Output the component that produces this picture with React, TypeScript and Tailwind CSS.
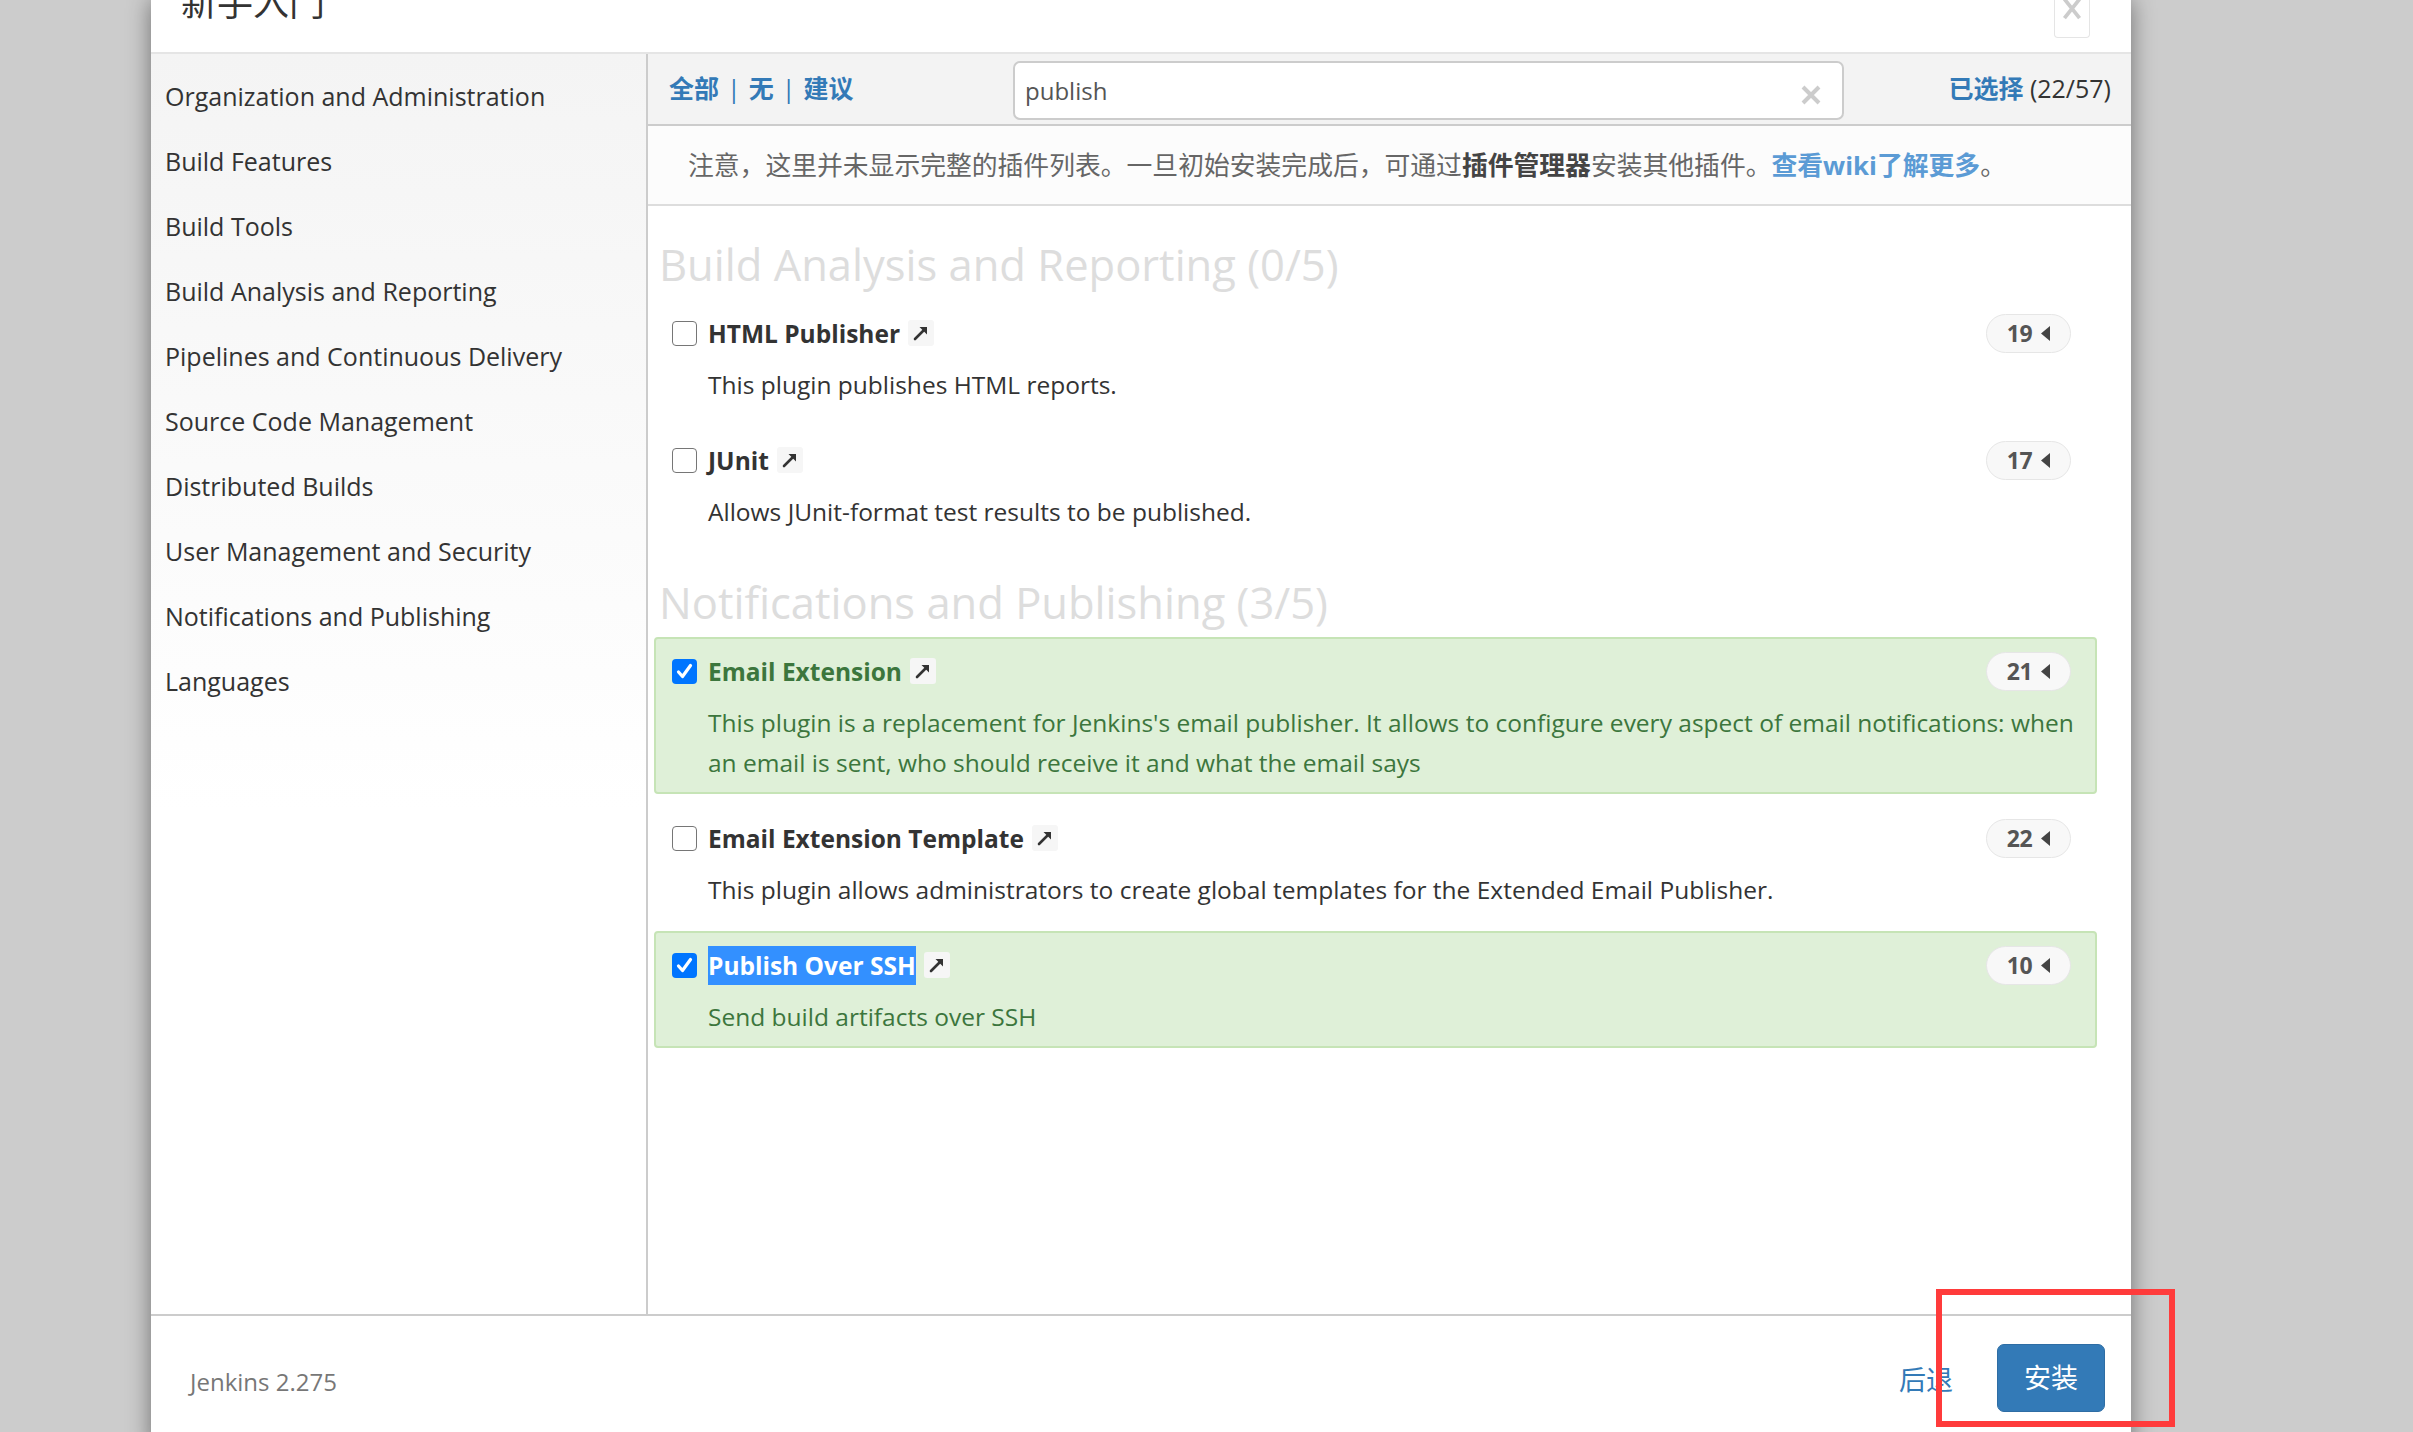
import React from "react";

const FONT = { fontFamily: "'Open Sans', 'Noto Sans CJK SC', sans-serif" };

const categories = [
  "Organization and Administration",
  "Build Features",
  "Build Tools",
  "Build Analysis and Reporting",
  "Pipelines and Continuous Delivery",
  "Source Code Management",
  "Distributed Builds",
  "User Management and Security",
  "Notifications and Publishing",
  "Languages",
];

type Plugin = {
  name: string;
  desc: string;
  deps: number;
  checked: boolean;
  highlight?: boolean;
};

const groups: { title: string; plugins: Plugin[] }[] = [
  {
    title: "Build Analysis and Reporting (0/5)",
    plugins: [
      { name: "HTML Publisher", desc: "This plugin publishes HTML reports.", deps: 19, checked: false },
      { name: "JUnit", desc: "Allows JUnit-format test results to be published.", deps: 17, checked: false },
    ],
  },
  {
    title: "Notifications and Publishing (3/5)",
    plugins: [
      {
        name: "Email Extension",
        desc: "This plugin is a replacement for Jenkins's email publisher. It allows to configure every aspect of email notifications: when an email is sent, who should receive it and what the email says",
        deps: 21,
        checked: true,
      },
      {
        name: "Email Extension Template",
        desc: "This plugin allows administrators to create global templates for the Extended Email Publisher.",
        deps: 22,
        checked: false,
      },
      { name: "Publish Over SSH", desc: "Send build artifacts over SSH", deps: 10, checked: true, highlight: true },
    ],
  },
];

function CheckBox({ checked }: { checked: boolean }) {
  if (checked) {
    return (
      <span className="w-[25px] h-[25px] rounded-[4px] bg-[#0075ff] flex items-center justify-center shrink-0">
        <svg width="19" height="19" viewBox="0 0 19 19">
          <path d="M3.5 10 L7.5 14.5 L15.5 3.5" fill="none" stroke="#fff" strokeWidth="3.2" strokeLinecap="round" strokeLinejoin="round" />
        </svg>
      </span>
    );
  }
  return <span className="w-[25px] h-[25px] rounded-[4px] border-[1.5px] border-[#767676] bg-white shrink-0" />;
}

function ExtLink() {
  return (
    <span className="w-[26px] h-[26px] rounded-[3px] bg-[#f6f6f6] flex items-center justify-center ml-[8px] shrink-0">
      <svg width="18" height="18" viewBox="0 0 18 18">
        <path d="M3 15 L12 6" stroke="#333" strokeWidth="2.6" strokeLinecap="round" />
        <path d="M7.5 3 L15 3 L15 10.5 Z" fill="#333" />
      </svg>
    </span>
  );
}

function Badge({ n }: { n: number }) {
  return (
    <span className="ml-auto w-[85px] h-[39px] rounded-full border border-[#e6e6e6] bg-[#f8f8f8] flex items-center justify-center gap-[9px] shrink-0">
      <span className="text-[23px] font-bold text-[#555] leading-none tracking-[-0.5px]">{n}</span>
      <svg width="9" height="15" viewBox="0 0 9 15">
        <path d="M9 0 L9 15 L0 7.5 Z" fill="#444" />
      </svg>
    </span>
  );
}

function PluginRow({ p }: { p: Plugin }) {
  const green = p.checked;
  return (
    <div
      className={
        "mt-[10px] border-2 rounded-[4px] pt-[12px] pb-[9px] pl-[16px] pr-[10px] " +
        (green ? "bg-[#dff0d8] border-[#c6e4b6] text-[#3c763d]" : "border-transparent text-[#333]")
      }
    >
      <div className="h-[40px] flex items-center mr-[14px]">
        <CheckBox checked={p.checked} />
        <span className="ml-[11px] text-[24.5px] font-bold leading-[39px]">
          {p.highlight ? <span className="bg-[#3390ff] text-white inline-block">{p.name}</span> : p.name}
        </span>
        <ExtLink />
        <Badge n={p.deps} />
      </div>
      <p className="mt-[12px] pl-[36px] text-[24.5px] leading-[40px]">{p.desc}</p>
    </div>
  );
}

export default function App() {
  return (
    <div className="w-[2413px] h-[1432px] bg-[#cccccc] overflow-hidden relative" style={FONT}>
      <div className="ml-[151px] w-[1980px] bg-white flex flex-col shadow-[0_0_22px_rgba(0,0,0,0.45)]">
        {/* header */}
        <div className="h-[54px] border-b-2 border-[#e5e5e5] flex items-start justify-between pl-[30px] pr-[41px] overflow-hidden">
          <h4 className="text-[36px] leading-[36px] mt-[-15px] text-[#333] font-normal">新手入门</h4>
          <span className="w-[36px] h-[38px] border border-t-0 border-[#e5e5e5] rounded-b-[4px] flex">
            <svg width="36" height="38" viewBox="0 0 36 38">
              <path d="M10 -2 L26 18 M26 -2 L10 18" stroke="#cccccc" strokeWidth="4" />
            </svg>
          </span>
        </div>

        {/* body */}
        <div className="h-[1260px] flex">
          <div className="w-[497px] border-r-2 border-[#cccccc] bg-[linear-gradient(to_bottom,#f4f4f4,#ffffff_60%)] pt-[10px] shrink-0">
            {categories.map((c) => (
              <div key={c} className="h-[65px] flex items-center pl-[14px] text-[25px] text-[#333]">
                {c}
              </div>
            ))}
          </div>

          <div className="flex-1 min-w-0 flex flex-col">
            <div className="h-[72px] border-b-2 border-[#cccccc] bg-[#f3f3f3] flex items-center pl-[21px] pr-[20px]">
              <div className="w-[344px] text-[25px] text-[#337ab7] flex items-center shrink-0">
                <span className="font-bold">全部</span>
                <span className="mx-[8px]">|</span>
                <span className="font-bold">无</span>
                <span className="mx-[8px]">|</span>
                <span className="font-bold">建议</span>
              </div>
              <div className="w-[831px] h-[59px] border-2 border-[#cccccc] rounded-[7px] bg-white flex items-center pl-[10px] pr-[20px] mt-[3px] shrink-0">
                <span className="text-[24px] text-[#555]">publish</span>
                <svg className="ml-auto mt-[8px]" width="22" height="22" viewBox="0 0 22 22">
                  <path d="M3 3 L19 19 M19 3 L3 19" stroke="#cccccc" strokeWidth="4" />
                </svg>
              </div>
              <div className="ml-auto text-[25px]">
                <span className="font-bold text-[#337ab7]">已选择</span>
                <span className="text-[#333]"> (22/57)</span>
              </div>
            </div>

            <div className="h-[80px] border-b-2 border-[#dddddd] bg-[#fcfcfc] flex items-center pl-[40px] text-[25.8px] text-[#666]">
              <span>
                注意，这里并未显示完整的插件列表。一旦初始安装完成后，可通过
                <b className="text-[#444]">插件管理器</b>
                安装其他插件。
                <b className="text-[#5b9bd5]">查看wiki了解更多</b>。
              </span>
            </div>

            <div className="flex-1 overflow-hidden pl-[6px] pr-[34px] pt-[34px]">
              {groups.map((g, gi) => (
                <div key={g.title} className={gi > 0 ? "mt-[35px]" : ""}>
                  <h2 className="pl-[5px] text-[43.5px] leading-[50px] text-[#dddddd] font-normal mb-[-1px]">{g.title}</h2>
                  {g.plugins.map((p) => (
                    <PluginRow key={p.name} p={p} />
                  ))}
                </div>
              ))}
            </div>
          </div>
        </div>

        {/* footer */}
        <div className="h-[136px] border-t-2 border-[#cccccc] flex items-center pl-[39px] pr-[26px] pb-[10px]">
          <span className="text-[24px] text-[#777] mt-[8px]">Jenkins 2.275</span>
          <span className="ml-auto text-[27px] text-[#337ab7] mt-[4px]">后退</span>
          <span className="ml-[44px] w-[108px] h-[68px] rounded-[7px] bg-[#337ab7] border border-[#2e6da4] text-white text-[27px] flex items-center justify-center">
            安装
          </span>
        </div>
      </div>

      <div className="absolute left-[1936px] top-[1289px] w-[239px] h-[138px] border-[6px] border-[#ff3b3b]" />
    </div>
  );
}
